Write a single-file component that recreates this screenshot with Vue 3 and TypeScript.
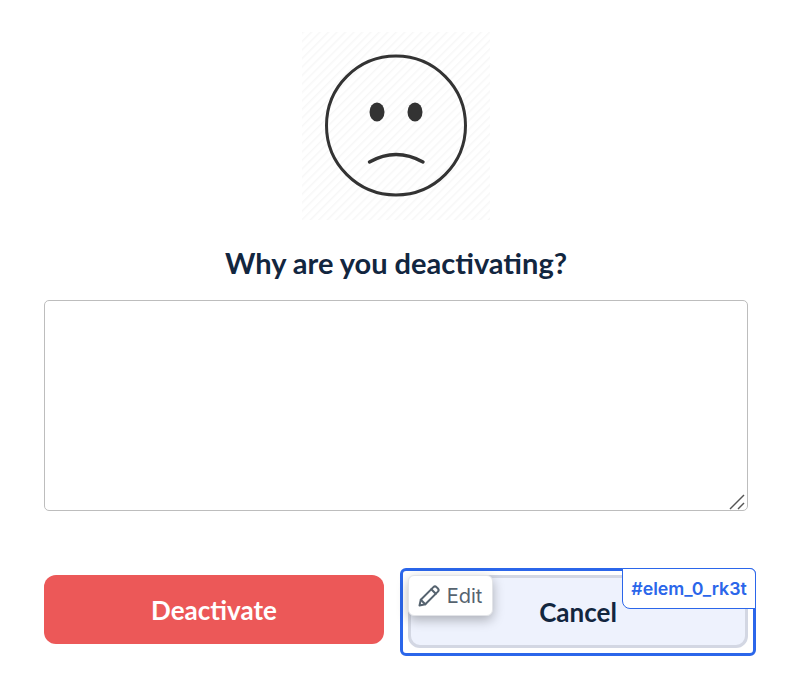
<template>
  <div class="page">
    <svg class="face" width="188" height="188" viewBox="0 0 188 188">
      <defs>
        <pattern id="stripes" width="6" height="6" patternUnits="userSpaceOnUse" patternTransform="rotate(45)">
          <rect width="6" height="6" fill="#ffffff" />
          <rect width="1.5" height="6" fill="#f7f7f7" />
        </pattern>
      </defs>
      <rect width="188" height="188" fill="url(#stripes)" />
      <circle cx="94" cy="93.5" r="69.5" fill="none" stroke="#333333" stroke-width="3" />
      <ellipse cx="75" cy="80" rx="7.5" ry="9.5" fill="#333333" />
      <ellipse cx="113" cy="80" rx="7.5" ry="9.5" fill="#333333" />
      <path d="M67.5 130 Q94 115 121 130" fill="none" stroke="#333333" stroke-width="3.4" stroke-linecap="round" />
    </svg>
    <h2 class="title">Why are you deactivating?</h2>
    <div class="reason-wrap">
      <textarea class="reason"></textarea>
      <svg class="grip" width="18" height="16" viewBox="0 0 18 16" stroke="#555555" stroke-width="1.5" fill="none">
        <path d="M2 15L16 1" />
        <path d="M10 15L16 9" />
      </svg>
    </div>
    <div class="actions">
      <button class="btn danger" type="button">Deactivate</button>
      <div class="cancel-wrap">
        <button class="btn cancel" type="button">Cancel</button>
        <div class="select-box"></div>
        <button class="edit-chip" type="button">
          <svg width="24" height="24" viewBox="0 0 24 24" fill="none" stroke="#56636f" stroke-width="2" stroke-linejoin="round" stroke-linecap="round">
            <path d="M2.5 21.5l1.3-5.8L16.4 3.1a2.2 2.2 0 0 1 3.1 0l1.4 1.4a2.2 2.2 0 0 1 0 3.1L8.3 20.2z" />
            <path d="M14.3 5.2l4.5 4.5" />
            <path d="M3.8 15.7l4.5 4.5" />
          </svg>
          <span>Edit</span>
        </button>
        <div class="elem-tag">#elem_0_rk3t</div>
      </div>
    </div>
  </div>
</template>

<script setup lang="ts">
</script>

<style>
html,
body {
  margin: 0;
  background: #ffffff;
}
</style>

<style scoped>
.page {
  width: 704px;
  height: 680px;
  box-sizing: border-box;
  margin-left: 44px;
  padding-top: 32px;
  display: flex;
  flex-direction: column;
  align-items: center;
  font-family: Lato, "Liberation Sans", sans-serif;
}

.face {
  display: block;
  flex: none;
}

.title {
  margin: 26px 0 0;
  font-size: 29px;
  line-height: 34px;
  font-weight: 700;
  color: #12263f;
}

.reason-wrap {
  position: relative;
  width: 100%;
  height: 211px;
  margin-top: 20px;
  flex: none;
}

.reason {
  display: block;
  width: 100%;
  height: 100%;
  box-sizing: border-box;
  border: 1px solid #bdbdbd;
  border-radius: 5px;
  background: #fff;
  outline: none;
  resize: none;
}

.grip {
  position: absolute;
  right: 2px;
  bottom: 1px;
}

.actions {
  width: 100%;
  margin-top: 64px;
  display: grid;
  grid-template-columns: 340px 340px;
  justify-content: space-between;
  align-items: start;
}

.btn {
  border-radius: 12px;
  font-family: inherit;
  font-size: 26px;
  font-weight: 700;
  cursor: pointer;
}

.danger {
  height: 69px;
  border: none;
  background: #ec5858;
  color: #ffffff;
}

.cancel-wrap {
  position: relative;
}

.cancel {
  width: 100%;
  height: 73px;
  display: block;
  border: 3px solid #d3d7e3;
  background: #eef2fd;
  color: #12263f;
}

.select-box {
  position: absolute;
  left: -8px;
  right: -8px;
  top: -7px;
  bottom: -8px;
  border: 3px solid #2b66ea;
  border-radius: 6px;
  pointer-events: none;
}

.edit-chip {
  position: absolute;
  left: 0;
  top: 0;
  width: 85px;
  height: 41px;
  padding: 0 2px 0 0;
  display: flex;
  align-items: center;
  justify-content: center;
  gap: 6px;
  border: 1px solid #e2e4e8;
  border-radius: 6px;
  background: #ffffff;
  box-shadow: 0 4px 12px rgba(0, 0, 0, 0.28);
  color: #56636f;
  font-family: Inter, "Liberation Sans", sans-serif;
  font-size: 20px;
  cursor: pointer;
}

.elem-tag {
  position: absolute;
  right: -8px;
  top: -7px;
  width: 134px;
  height: 41px;
  box-sizing: border-box;
  display: flex;
  align-items: center;
  justify-content: center;
  border: 1px solid #2b66ea;
  border-radius: 0 6px 0 8px;
  background: #ffffff;
  color: #2b66ea;
  font-family: Inter, "Liberation Sans", sans-serif;
  font-size: 17.8px;
  font-weight: 600;
}
</style>
